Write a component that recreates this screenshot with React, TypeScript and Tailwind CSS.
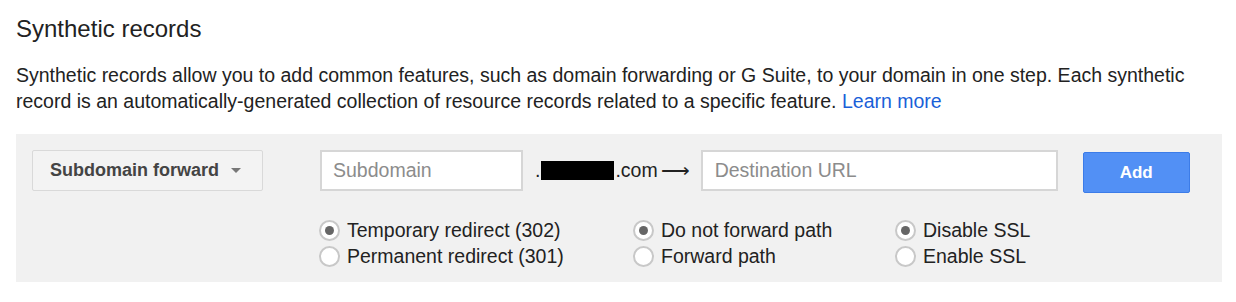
import React from 'react';

function Radio({ label, checked }: { label: string; checked?: boolean }) {
  return (
    <label className="flex h-[26px] items-center gap-[7px]">
      <span className="flex h-[21px] w-[21px] items-center justify-center rounded-full border-[2px] border-[#c8c8c8] bg-white">
        {checked && <span className="h-[9px] w-[9px] rounded-full bg-[#666]" />}
      </span>
      <span className="text-[19.5px] leading-[26px] text-[#222]">{label}</span>
    </label>
  );
}

export default function App() {
  return (
    <div className="h-[302px] w-[1236px] bg-white px-[16px] pt-[15px] font-['Liberation_Sans',Arial,sans-serif] text-[#222]">
      <h2 className="text-[24px] leading-[28px] font-normal">Synthetic records</h2>
      <p className="mt-[19px] text-[19.5px] leading-[26px]">
        Synthetic records allow you to add common features, such as domain forwarding or G Suite, to your domain in one step. Each synthetic
        <br />
        record is an automatically-generated collection of resource records related to a specific feature.{' '}
        <a className="text-[#1a5fd8]">Learn more</a>
      </p>

      <div className="mt-[20px] h-[148px] w-[1206px] bg-[#f1f1f1] pl-[16px] pt-[16px]">
        <div className="flex items-start">
          <button className="flex h-[41px] w-[231px] items-center justify-between rounded-[2px] border border-[#d9d9d9] bg-[#f3f3f3] pl-[17px] pr-[21px] text-[18px] font-bold text-[#444]">
            Subdomain forward
            <span className="h-0 w-0 border-x-[5px] border-t-[5px] border-x-transparent border-t-[#777]" />
          </button>

          <input
            placeholder="Subdomain"
            className="ml-[57px] h-[41px] w-[203px] border-[2px] border-[#d6d6d6] bg-white px-[11px] text-[19.5px] placeholder:text-[#8c8c8c] outline-none"
          />

          <div className="ml-[12px] flex h-[41px] items-center text-[19.5px] text-[#222]">
            <span>.</span>
            <span className="mx-[1px] inline-block h-[19px] w-[73px] bg-black" />
            <span>.com</span>
            <span className="ml-[3px]">⟶</span>
          </div>

          <input
            placeholder="Destination URL"
            className="ml-[11px] h-[41px] w-[357px] border-[2px] border-[#d6d6d6] bg-white px-[12px] text-[19.5px] placeholder:text-[#8c8c8c] outline-none"
          />

          <button className="mt-[2px] ml-[25px] h-[41px] w-[107px] rounded-[2px] border border-[#3c7ce8] bg-[#5290f5] text-[17px] font-bold text-white">
            Add
          </button>
        </div>

        <div className="mt-[24px] ml-[287px] flex">
          <div className="w-[314px]">
            <Radio label="Temporary redirect (302)" checked />
            <Radio label="Permanent redirect (301)" />
          </div>
          <div className="w-[262px]">
            <Radio label="Do not forward path" checked />
            <Radio label="Forward path" />
          </div>
          <div>
            <Radio label="Disable SSL" checked />
            <Radio label="Enable SSL" />
          </div>
        </div>
      </div>
    </div>
  );
}
